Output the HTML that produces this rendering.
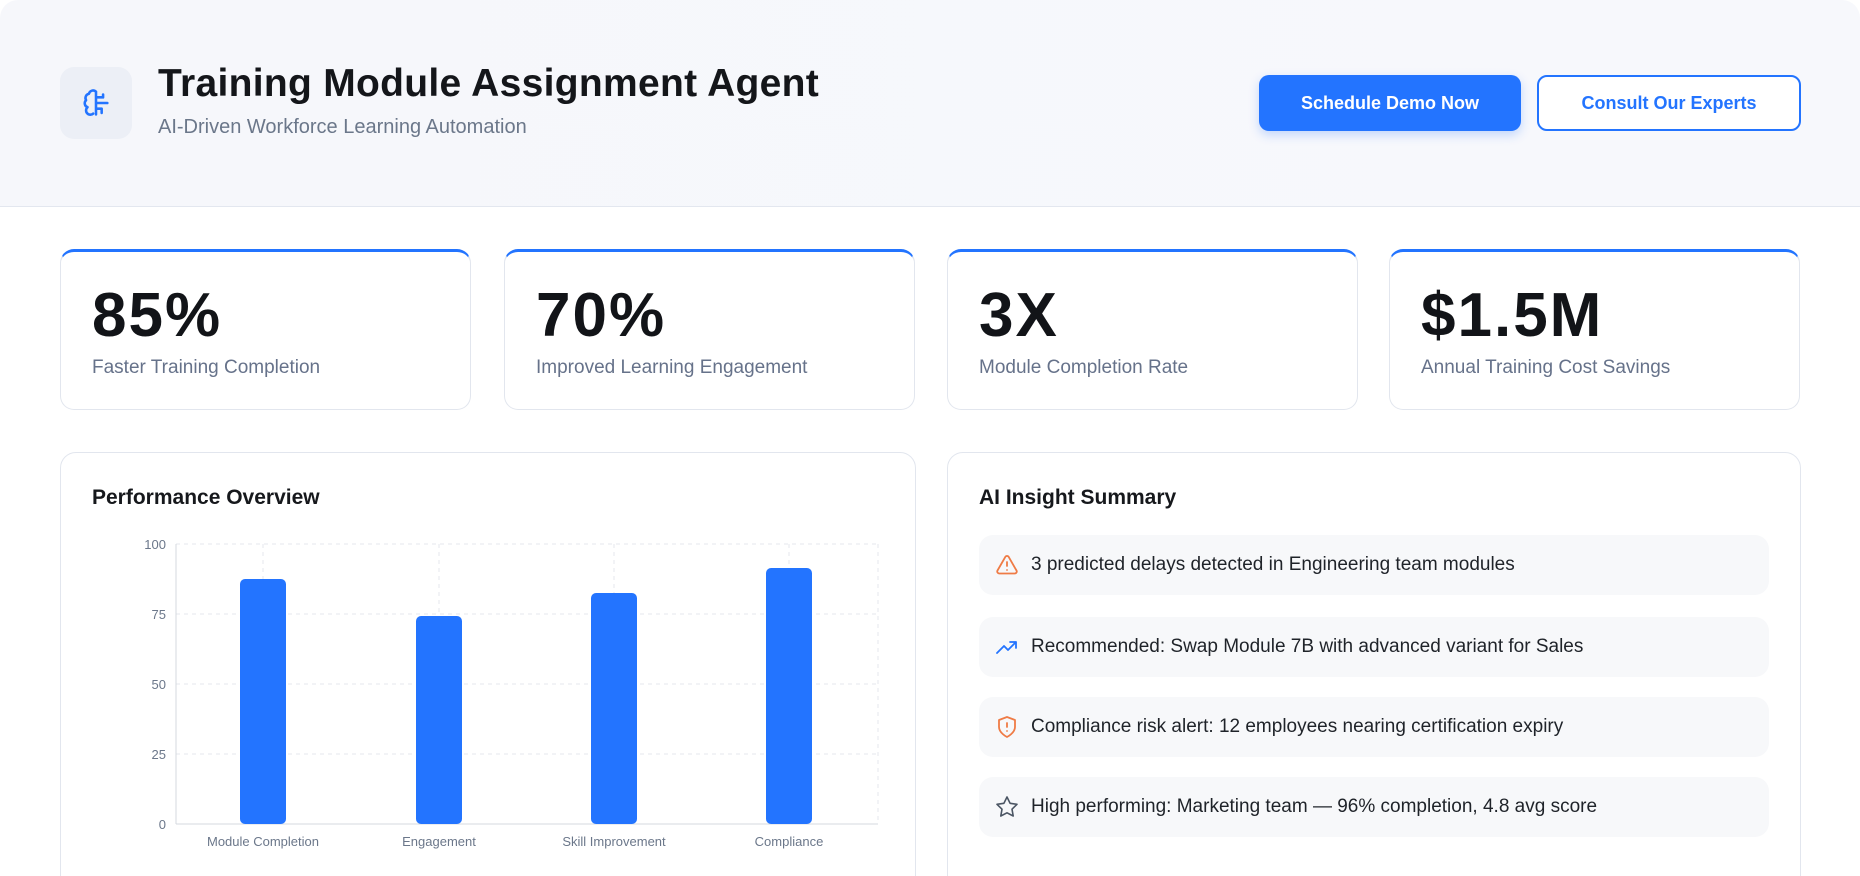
<!DOCTYPE html>
<html style="overflow:hidden;height:876px"><head><meta charset="utf-8"><style>
*{box-sizing:border-box;margin:0;padding:0}
body{width:1860px;height:876px;overflow:hidden;background:#fff;font-family:"Liberation Sans",sans-serif;position:relative}
.hdr{position:absolute;left:0;top:0;width:1860px;height:207px;background:linear-gradient(90deg,#f6f7fb,#f7f8fc);border-bottom:1px solid #e3e7ef;border-radius:18px 18px 0 0}
.ico{position:absolute;left:60px;top:67px;width:72px;height:72px;border-radius:14px;background:#eceff6;display:flex;align-items:center;justify-content:center}
.t1{position:absolute;left:158px;top:62px;font-size:39px;font-weight:bold;color:#14161a;letter-spacing:0.3px}
.t2{position:absolute;left:158px;top:116px;font-size:20px;color:#6b778a}
.btn{position:absolute;top:75px;height:56px;border-radius:10px;font-size:18px;font-weight:bold;display:flex;align-items:center;justify-content:center}
.b1{left:1259px;width:262px;background:#2374ff;color:#fff;box-shadow:0 4px 10px rgba(35,116,255,.25)}
.b2{left:1537px;width:264px;border:2px solid #2374ff;color:#2374ff;background:#fff}
.card{position:absolute;top:249px;width:411px;height:161px;border:1px solid #e2e6ee;border-top:3px solid #2374ff;border-radius:14px;background:#fff}
.num{position:absolute;left:31px;top:28px;font-size:62px;font-weight:bold;color:#121418;letter-spacing:2px}
.lbl{position:absolute;left:31px;top:105px;font-size:19px;color:#66728a}
.big{position:absolute;top:452px;height:440px;border:1px solid #e2e6ee;border-radius:16px;background:#fff}
.h{position:absolute;left:31px;top:33px;font-size:21px;font-weight:bold;color:#16181c}
.it{position:absolute;left:31px;width:790px;height:60px;border-radius:14px;background:#f7f8fa;display:flex;align-items:center;font-size:19px;color:#1f2329}
.it svg{margin-left:16px;margin-right:12px}
</style></head><body>
<div class="hdr">
<div class="ico"><svg width="34" height="34" viewBox="0 0 24 24" fill="none" stroke="#2374ff" stroke-width="1.8" stroke-linecap="round" stroke-linejoin="round"><path d="M12 4a3 3 0 0 0-5 1.5A3 3 0 0 0 5 10a3 3 0 0 0 1 5 3 3 0 0 0 4 4.5M12 4v16M12 8h5M12 12h6M12 16h4M17 8V6M18 12l2 0M16 16v3"/></svg></div>
<div class="t1">Training Module Assignment Agent</div>
<div class="t2">AI-Driven Workforce Learning Automation</div>
<div class="btn b1">Schedule Demo Now</div>
<div class="btn b2">Consult Our Experts</div>
</div>
<div class="card" style="left:60px"><div class="num">85%</div><div class="lbl">Faster Training Completion</div></div>
<div class="card" style="left:504px"><div class="num">70%</div><div class="lbl">Improved Learning Engagement</div></div>
<div class="card" style="left:947px"><div class="num">3X</div><div class="lbl">Module Completion Rate</div></div>
<div class="card" style="left:1389px"><div class="num">$1.5M</div><div class="lbl">Annual Training Cost Savings</div></div>
<div class="big" style="left:60px;width:856px"><div class="h">Performance Overview</div></div>
<svg style="position:absolute;left:0;top:0" width="1860" height="876" font-family="Liberation Sans" font-size="13" fill="#6b778a">
<g stroke="#e4e7ec" stroke-dasharray="4 4" stroke-width="1">
<line x1="176" y1="544" x2="878" y2="544"/><line x1="176" y1="614" x2="878" y2="614"/><line x1="176" y1="684" x2="878" y2="684"/><line x1="176" y1="754" x2="878" y2="754"/>
<line x1="263" y1="544" x2="263" y2="824"/><line x1="439" y1="544" x2="439" y2="824"/><line x1="614" y1="544" x2="614" y2="824"/><line x1="789" y1="544" x2="789" y2="824"/><line x1="878" y1="544" x2="878" y2="824"/>
</g>
<line x1="176" y1="824" x2="878" y2="824" stroke="#d4d8df"/><line x1="176" y1="544" x2="176" y2="824" stroke="#d4d8df"/>
<g text-anchor="end"><text x="166" y="549">100</text><text x="166" y="619">75</text><text x="166" y="689">50</text><text x="166" y="759">25</text><text x="166" y="829">0</text></g>
<g fill="#2374ff"><rect x="240" y="579" width="46" height="245" rx="5"/><rect x="416" y="616" width="46" height="208" rx="5"/><rect x="591" y="593" width="46" height="231" rx="5"/><rect x="766" y="568" width="46" height="256" rx="5"/></g>
<g text-anchor="middle"><text x="263" y="846">Module Completion</text><text x="439" y="846">Engagement</text><text x="614" y="846">Skill Improvement</text><text x="789" y="846">Compliance</text></g>
</svg>
<div class="big" style="left:947px;width:854px"><div class="h">AI Insight Summary</div>
<div class="it" style="top:82px"><svg width="24" height="24" viewBox="0 0 24 24" fill="none" stroke="#ef7b45" stroke-width="1.8" stroke-linecap="round" stroke-linejoin="round"><path d="M10.3 3.9L2.5 17.5A2 2 0 0 0 4.2 20.5h15.6a2 2 0 0 0 1.7-3L13.7 3.9a2 2 0 0 0-3.4 0zM12 9v4M12 17h.01"/></svg>3 predicted delays detected in Engineering team modules</div>
<div class="it" style="top:164px"><svg width="24" height="24" viewBox="0 0 24 24" fill="none" stroke="#2374ff" stroke-width="1.8" stroke-linecap="round" stroke-linejoin="round"><path d="M2 18l7-7 4 4 8-8M15 7h6v6"/></svg>Recommended: Swap Module 7B with advanced variant for Sales</div>
<div class="it" style="top:244px"><svg width="24" height="24" viewBox="0 0 24 24" fill="none" stroke="#ef7b45" stroke-width="1.8" stroke-linecap="round" stroke-linejoin="round"><path d="M12 22s8-4 8-10V5l-8-3-8 3v7c0 6 8 10 8 10zM12 8v4M12 16h.01"/></svg>Compliance risk alert: 12 employees nearing certification expiry</div>
<div class="it" style="top:324px"><svg width="24" height="24" viewBox="0 0 24 24" fill="none" stroke="#4b5563" stroke-width="1.6" stroke-linejoin="round"><path d="M12 2l3.1 6.3 6.9 1-5 4.9 1.2 6.8L12 17.8 5.8 21l1.2-6.8-5-4.9 6.9-1z"/></svg>High performing: Marketing team — 96% completion, 4.8 avg score</div>
</div>
</body></html>
